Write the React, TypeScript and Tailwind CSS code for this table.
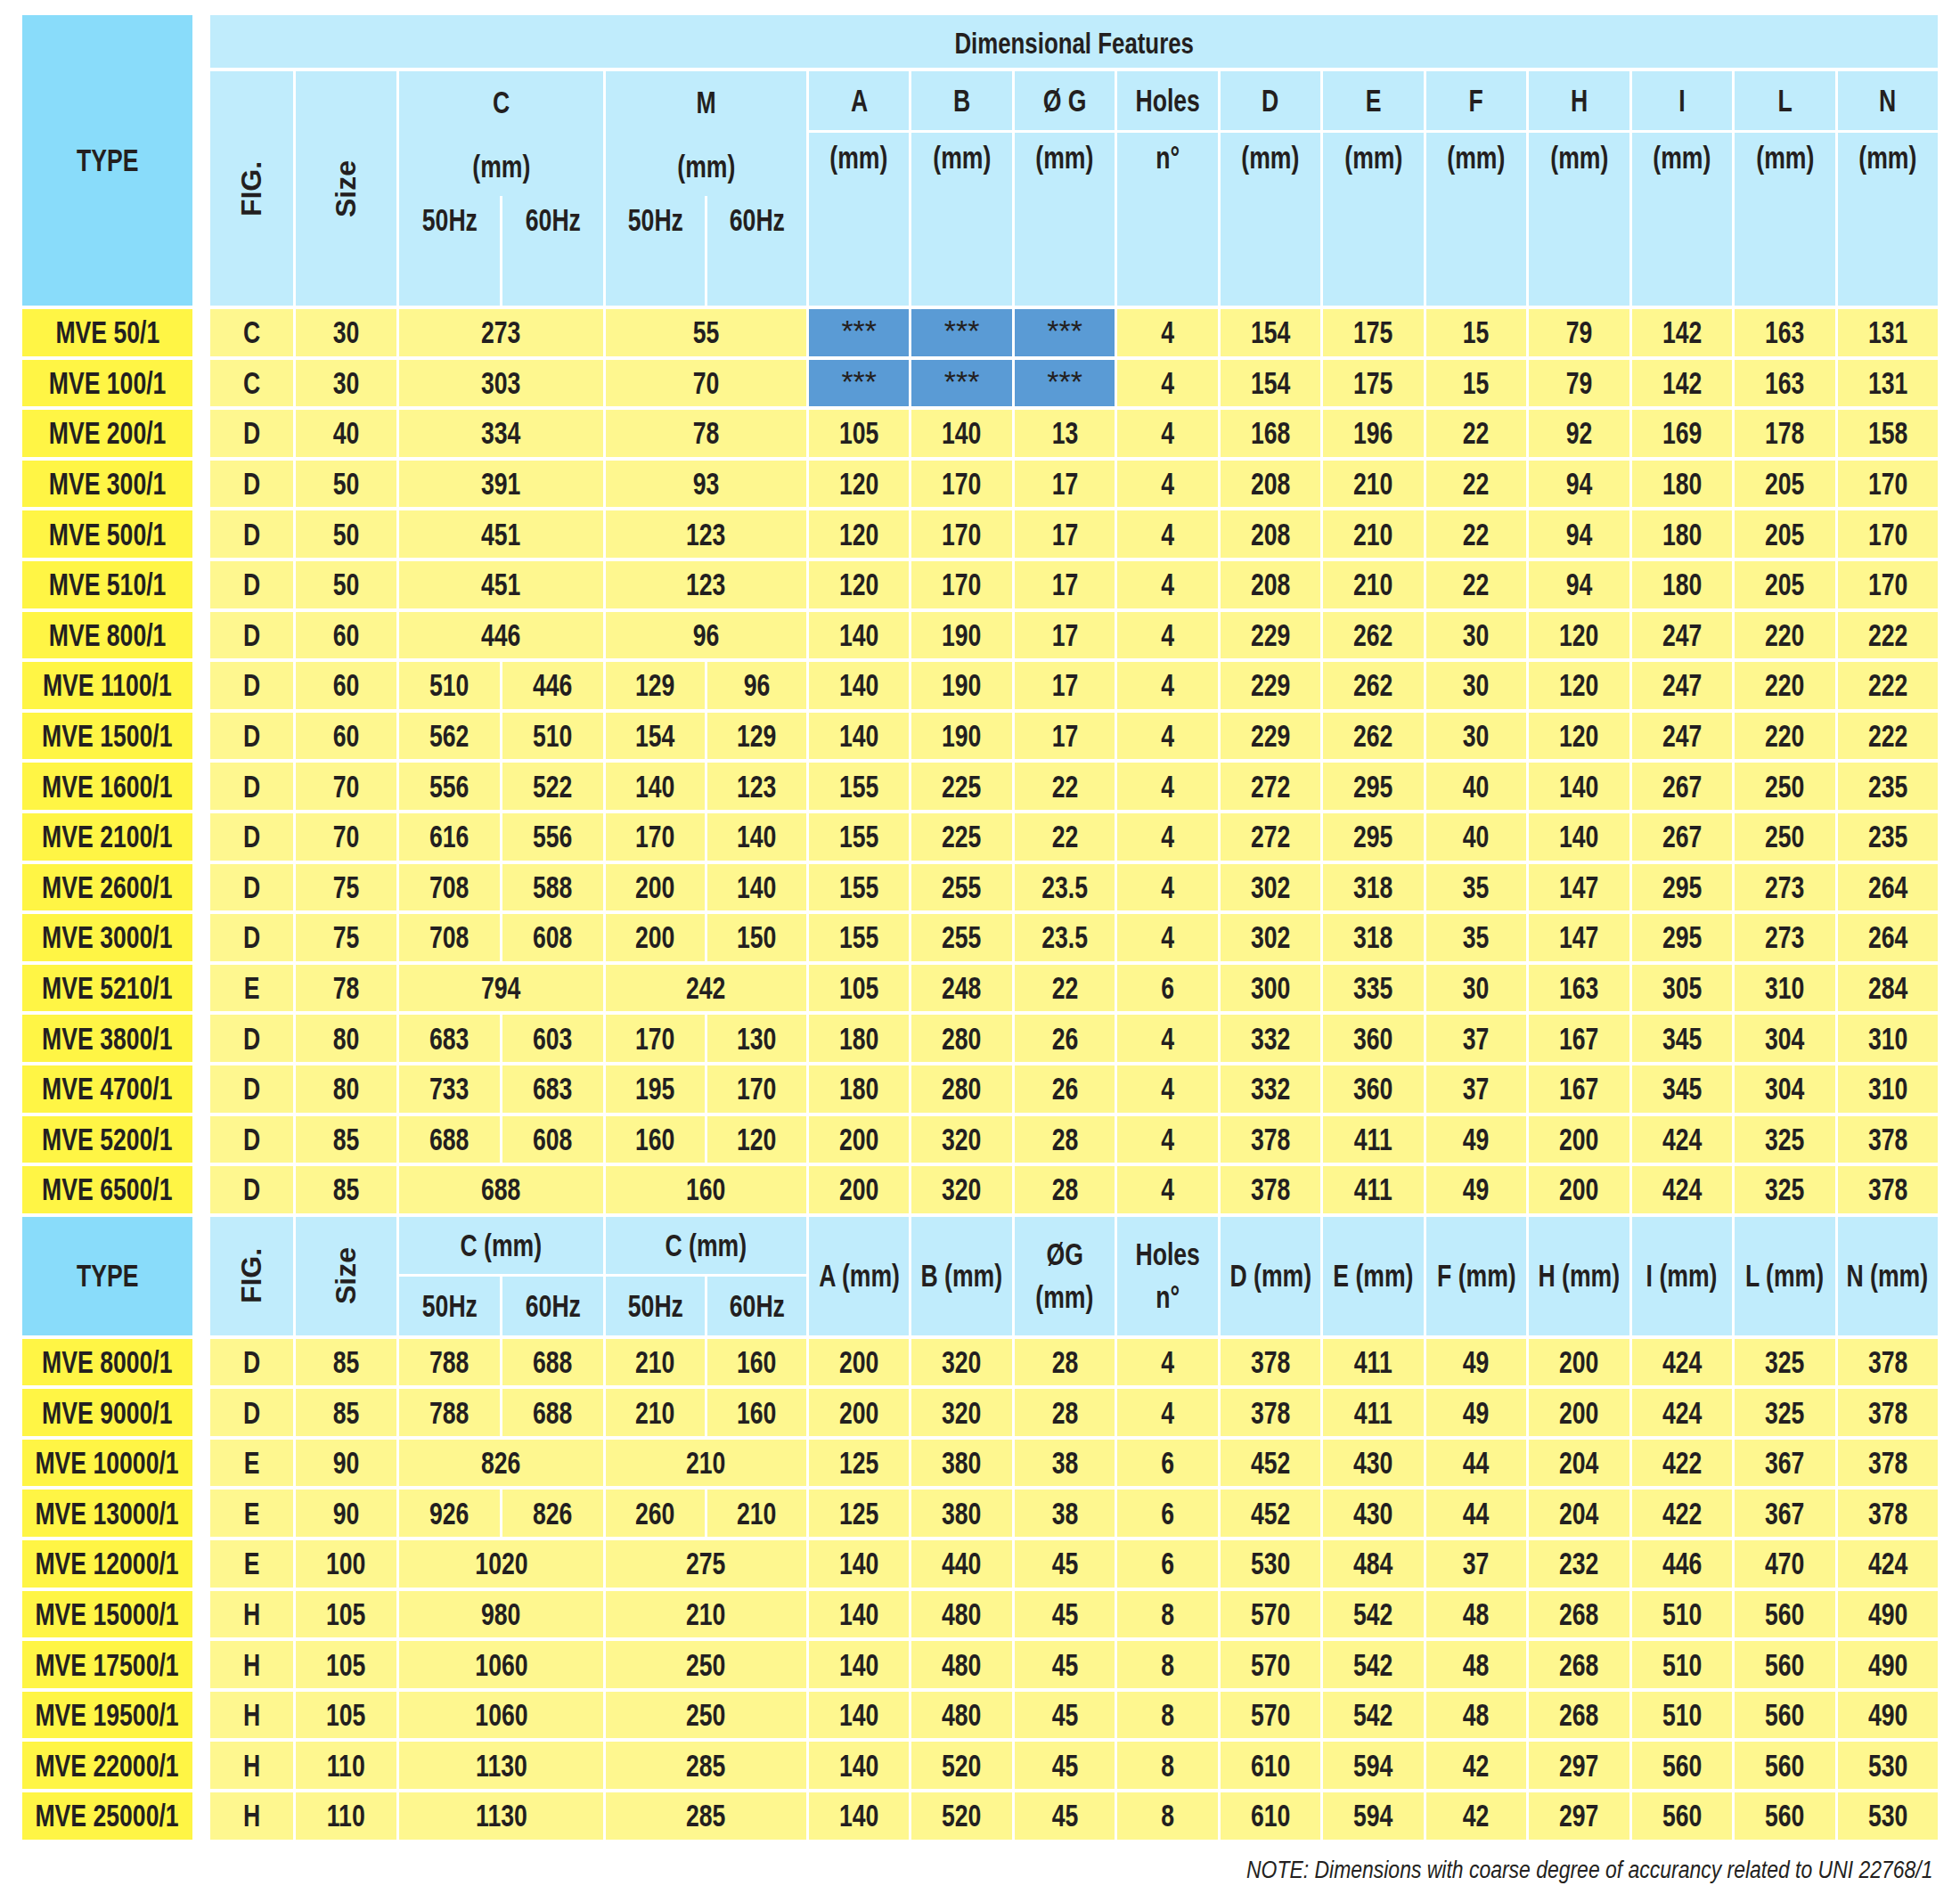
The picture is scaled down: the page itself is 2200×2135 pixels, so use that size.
import React from "react";

type Pair = string | [string, string];
type Row = [string, string, string, Pair, Pair, string, string, string, string, string, string, string, string, string, string, string];

const top: Row[] = [
  ["MVE 50/1", "C", "30", "273", "55", "***", "***", "***", "4", "154", "175", "15", "79", "142", "163", "131"],
  ["MVE 100/1", "C", "30", "303", "70", "***", "***", "***", "4", "154", "175", "15", "79", "142", "163", "131"],
  ["MVE 200/1", "D", "40", "334", "78", "105", "140", "13", "4", "168", "196", "22", "92", "169", "178", "158"],
  ["MVE 300/1", "D", "50", "391", "93", "120", "170", "17", "4", "208", "210", "22", "94", "180", "205", "170"],
  ["MVE 500/1", "D", "50", "451", "123", "120", "170", "17", "4", "208", "210", "22", "94", "180", "205", "170"],
  ["MVE 510/1", "D", "50", "451", "123", "120", "170", "17", "4", "208", "210", "22", "94", "180", "205", "170"],
  ["MVE 800/1", "D", "60", "446", "96", "140", "190", "17", "4", "229", "262", "30", "120", "247", "220", "222"],
  ["MVE 1100/1", "D", "60", ["510", "446"], ["129", "96"], "140", "190", "17", "4", "229", "262", "30", "120", "247", "220", "222"],
  ["MVE 1500/1", "D", "60", ["562", "510"], ["154", "129"], "140", "190", "17", "4", "229", "262", "30", "120", "247", "220", "222"],
  ["MVE 1600/1", "D", "70", ["556", "522"], ["140", "123"], "155", "225", "22", "4", "272", "295", "40", "140", "267", "250", "235"],
  ["MVE 2100/1", "D", "70", ["616", "556"], ["170", "140"], "155", "225", "22", "4", "272", "295", "40", "140", "267", "250", "235"],
  ["MVE 2600/1", "D", "75", ["708", "588"], ["200", "140"], "155", "255", "23.5", "4", "302", "318", "35", "147", "295", "273", "264"],
  ["MVE 3000/1", "D", "75", ["708", "608"], ["200", "150"], "155", "255", "23.5", "4", "302", "318", "35", "147", "295", "273", "264"],
  ["MVE 5210/1", "E", "78", "794", "242", "105", "248", "22", "6", "300", "335", "30", "163", "305", "310", "284"],
  ["MVE 3800/1", "D", "80", ["683", "603"], ["170", "130"], "180", "280", "26", "4", "332", "360", "37", "167", "345", "304", "310"],
  ["MVE 4700/1", "D", "80", ["733", "683"], ["195", "170"], "180", "280", "26", "4", "332", "360", "37", "167", "345", "304", "310"],
  ["MVE 5200/1", "D", "85", ["688", "608"], ["160", "120"], "200", "320", "28", "4", "378", "411", "49", "200", "424", "325", "378"],
  ["MVE 6500/1", "D", "85", "688", "160", "200", "320", "28", "4", "378", "411", "49", "200", "424", "325", "378"],
];

const bottom: Row[] = [
  ["MVE 8000/1", "D", "85", ["788", "688"], ["210", "160"], "200", "320", "28", "4", "378", "411", "49", "200", "424", "325", "378"],
  ["MVE 9000/1", "D", "85", ["788", "688"], ["210", "160"], "200", "320", "28", "4", "378", "411", "49", "200", "424", "325", "378"],
  ["MVE 10000/1", "E", "90", "826", "210", "125", "380", "38", "6", "452", "430", "44", "204", "422", "367", "378"],
  ["MVE 13000/1", "E", "90", ["926", "826"], ["260", "210"], "125", "380", "38", "6", "452", "430", "44", "204", "422", "367", "378"],
  ["MVE 12000/1", "E", "100", "1020", "275", "140", "440", "45", "6", "530", "484", "37", "232", "446", "470", "424"],
  ["MVE 15000/1", "H", "105", "980", "210", "140", "480", "45", "8", "570", "542", "48", "268", "510", "560", "490"],
  ["MVE 17500/1", "H", "105", "1060", "250", "140", "480", "45", "8", "570", "542", "48", "268", "510", "560", "490"],
  ["MVE 19500/1", "H", "105", "1060", "250", "140", "480", "45", "8", "570", "542", "48", "268", "510", "560", "490"],
  ["MVE 22000/1", "H", "110", "1130", "285", "140", "520", "45", "8", "610", "594", "42", "297", "560", "560", "530"],
  ["MVE 25000/1", "H", "110", "1130", "285", "140", "520", "45", "8", "610", "594", "42", "297", "560", "560", "530"],
];

const letters = ["A", "B", "Ø G", "Holes", "D", "E", "F", "H", "I", "L", "N"];

// condensed text: no narrow face installed, so squeeze horizontally
const T = ({ children }: { children: React.ReactNode }) => (
  <span className="inline-block scale-x-[0.76] whitespace-nowrap">{children}</span>
);

// yellow data cell
const Cell = ({ children, span }: { children: React.ReactNode; span?: boolean }) => (
  <div className={`flex min-w-0 items-center justify-center bg-[#fef78f] ${span ? "col-span-2" : ""}`}>
    <T>{children}</T>
  </div>
);

const Split = ({ v }: { v: Pair }) =>
  Array.isArray(v) ? (
    <>
      <Cell>{v[0]}</Cell>
      <Cell>{v[1]}</Cell>
    </>
  ) : (
    <Cell span>{v}</Cell>
  );

const DataRow = ({ r }: { r: Row }) => {
  const [type, fig, size, c, m, ...rest] = r;
  return (
    <>
      <div className="col-start-1 flex min-w-0 items-center justify-center bg-[#fff545]">
        <T>{type}</T>
      </div>
      <div className="col-start-3 flex min-w-0 items-center justify-center bg-[#fef78f]">
        <T>{fig}</T>
      </div>
      <Cell>{size}</Cell>
      <Split v={c} />
      <Split v={m} />
      {rest.map((v, i) =>
        v === "***" ? (
          <div key={i} className="flex min-w-0 items-center justify-center bg-[#5a9bd5] pb-[4px] text-[34px] font-normal">
            ***
          </div>
        ) : (
          <Cell key={i}>{v}</Cell>
        )
      )}
    </>
  );
};

const Rotated = ({ text, className = "" }: { text: string; className?: string }) => (
  <div className={`flex min-w-0 items-center justify-center bg-[#c0ecfc] ${className}`}>
    <span className="inline-block -rotate-90 whitespace-nowrap text-[32px] font-bold">{text}</span>
  </div>
);

const Head = ({ children, className = "" }: { children: React.ReactNode; className?: string }) => (
  <div className={`flex min-w-0 items-center justify-center bg-[#c0ecfc] ${className}`}>
    <T>{children}</T>
  </div>
);

export default function App() {
  return (
    <div className="min-h-[2135px] w-[2200px] bg-white pl-[25px] pt-[17px] font-['Liberation_Sans',Arial,sans-serif] text-[35px] leading-[38px] font-semibold text-[#231f20]">
      <div className="grid w-[2150px] grid-cols-[191px_14px_93px_113px_113px_113px_111px_111px_repeat(11,minmax(0,1fr))] grid-rows-[59px_263px_repeat(18,52.6px)_133px_repeat(10,52.6px)] gap-x-[3px] gap-y-[4px]">
        {/* top header */}
        <div className="col-start-1 row-span-2 flex items-center justify-center bg-[#89dcfa]">
          <T>TYPE</T>
        </div>
        <Head className="col-span-17 col-start-3 pt-[2px] text-[34px]">Dimensional Features</Head>
        <Rotated text="FIG." className="col-start-3" />
        <Rotated text="Size" />
        {["C", "M"].map((l) => (
          <div key={l} className="col-span-2 flex min-w-0 flex-col bg-[#c0ecfc]">
            <div className="flex h-[140px] flex-col items-center pt-[16px]">
              <T>{l}</T>
              <span className="mt-[34px]">
                <T>(mm)</T>
              </span>
            </div>
            <div className="flex flex-1 gap-[3px] bg-white">
              <div className="flex flex-1 justify-center bg-[#c0ecfc] pt-[8px]">
                <T>50Hz</T>
              </div>
              <div className="flex flex-1 justify-center bg-[#c0ecfc] pt-[8px]">
                <T>60Hz</T>
              </div>
            </div>
          </div>
        ))}
        {letters.map((l) => (
          <div key={l} className="flex min-w-0 flex-col gap-[3px]">
            <Head className="h-[66px]">{l}</Head>
            <div className="flex flex-1 justify-center bg-[#c0ecfc] pt-[9px]">
              <T>{l === "Holes" ? "n°" : "(mm)"}</T>
            </div>
          </div>
        ))}

        {top.map((r) => (
          <DataRow key={r[0]} r={r} />
        ))}

        {/* second header */}
        <div className="col-start-1 flex items-center justify-center bg-[#89dcfa]">
          <T>TYPE</T>
        </div>
        <Rotated text="FIG." className="col-start-3" />
        <Rotated text="Size" />
        {["C (mm)", "C (mm)"].map((l, i) => (
          <div key={i} className="col-span-2 flex min-w-0 flex-col gap-[3px]">
            <Head className="h-[64px]">{l}</Head>
            <div className="flex flex-1 gap-[3px]">
              <Head className="flex-1">50Hz</Head>
              <Head className="flex-1">60Hz</Head>
            </div>
          </div>
        ))}
        <Head>A (mm)</Head>
        <Head>B (mm)</Head>
        <div className="flex min-w-0 flex-col items-center justify-center bg-[#c0ecfc] leading-[48px]">
          <T>ØG</T>
          <T>(mm)</T>
        </div>
        <div className="flex min-w-0 flex-col items-center justify-center bg-[#c0ecfc] leading-[48px]">
          <T>Holes</T>
          <T>n°</T>
        </div>
        {["D", "E", "F", "H", "I", "L", "N"].map((l) => (
          <Head key={l}>{l} (mm)</Head>
        ))}

        {bottom.map((r) => (
          <DataRow key={r[0]} r={r} />
        ))}
      </div>
      <div className="mt-[19px] flex w-[2150px] justify-end pr-[6px]">
        <span className="inline-block origin-right scale-x-[0.85] whitespace-nowrap text-[27px] font-normal italic leading-[30px]">
          NOTE: Dimensions with coarse degree of accurancy related to UNI 22768/1
        </span>
      </div>
    </div>
  );
}
